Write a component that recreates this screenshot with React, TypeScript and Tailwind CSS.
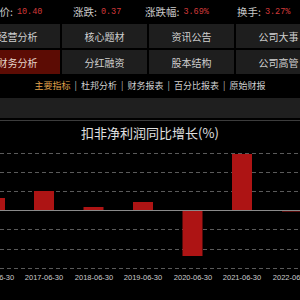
export default function App() {
  const quotes = [
    { label: "现价:", value: "10.40", w: "w-[84px] ml-[-11px]" },
    { label: "涨跌:", value: "0.37", w: "w-[72px]" },
    { label: "涨跌幅:", value: "3.69%", w: "w-[92px]" },
    { label: "换手:", value: "3.27%", w: "w-[80px]" },
  ];
  const buttons = [
    "经营分析", "核心题材", "资讯公告", "公司大事",
    "财务分析", "分红融资", "股本结构", "公司高管",
  ];
  const tabs = ["主要指标", "杜邦分析", "财务报表", "百分比报表", "原始财报"];
  const gridY = [8.5, 27.5, 46.5, 84.5, 104.5, 123.5];
  const zero = 65.5;
  const bars = [
    { x: -15, top: 53 },
    { x: 34, top: 46 },
    { x: 83.5, top: 62 },
    { x: 133, top: 57 },
    { x: 182.5, top: 111 },
    { x: 232, top: 9 },
    { x: 282, top: 66.5 },
  ];
  const labels = [
    { x: -5, t: "2016-06-30" },
    { x: 44, t: "2017-06-30" },
    { x: 94, t: "2018-06-30" },
    { x: 143, t: "2019-06-30" },
    { x: 193, t: "2020-06-30" },
    { x: 242, t: "2021-06-30" },
    { x: 292, t: "2022-06-30" },
  ];
  return (
    <div className="w-[300px] h-[300px] bg-black overflow-hidden font-['Noto_Sans_CJK_SC','Noto_Sans',sans-serif] text-[#c8c8c8]">
      <div className="h-[24px] flex items-center text-[10.5px] whitespace-nowrap">
        {quotes.map((q) => (
          <div key={q.label} className={`${q.w} shrink-0 flex items-center gap-[4px]`}>
            <span>{q.label}</span>
            <span className="font-['Liberation_Mono',monospace] text-[8.5px] text-[#d23a3a]">{q.value}</span>
          </div>
        ))}
      </div>
      <div className="grid grid-cols-[repeat(4,85px)] gap-[2px] ml-[-25px] w-[346px]">
        {buttons.map((b) => (
          <div
            key={b}
            className={`h-[24px] flex items-center justify-center text-[10px] ${
              b === "财务分析" ? "bg-[#5c0c04] text-[#e6d6cc]" : "bg-[#1e1e1e] text-[#d0d0d0]"
            }`}
          >
            {b}
          </div>
        ))}
      </div>
      <div className="h-[24px] flex items-center justify-center text-[9px] whitespace-nowrap">
        {tabs.map((t, i) => (
          <div key={t} className="flex items-center">
            {i > 0 && <span className="mx-[4px] text-[#bbbbbb]">|</span>}
            <span className={i === 0 ? "text-[#e3a44c]" : "text-[#d0d0d0]"}>{t}</span>
          </div>
        ))}
      </div>
      <div className="h-[20px] bg-[#1f1f1f]" />
      <div className="h-[2px]" />
      <div className="h-[1px] bg-[#3c3c3c]" />
      <div className="h-[24px] flex items-center justify-center text-[13px] text-[#e0e0e0]">
        扣非净利润同比增长(%)
      </div>
      <svg width="300" height="155" viewBox="0 0 300 155" className="block">
        {gridY.map((y) => (
          <line key={y} x1="0" x2="300" y1={y} y2={y} stroke="#5a5a5a" strokeWidth="1" strokeDasharray="4 3" />
        ))}
        {bars.map((b, i) => {
          const y = Math.min(b.top, zero);
          const h = Math.abs(b.top - zero);
          return <rect key={i} x={b.x} y={y} width="20" height={Math.max(h, 1)} fill="#ad1414" />;
        })}
        <line x1="0" x2="300" y1={zero} y2={zero} stroke="#8a8a8a" strokeWidth="1" />
        {labels.map((l) => (
          <text
            key={l.t}
            x={l.x}
            y="135"
            textAnchor="middle"
            fontSize="7.5"
            fill="#cccccc"
            fontFamily="'Liberation Sans', sans-serif"
          >
            {l.t}
          </text>
        ))}
      </svg>
    </div>
  );
}
